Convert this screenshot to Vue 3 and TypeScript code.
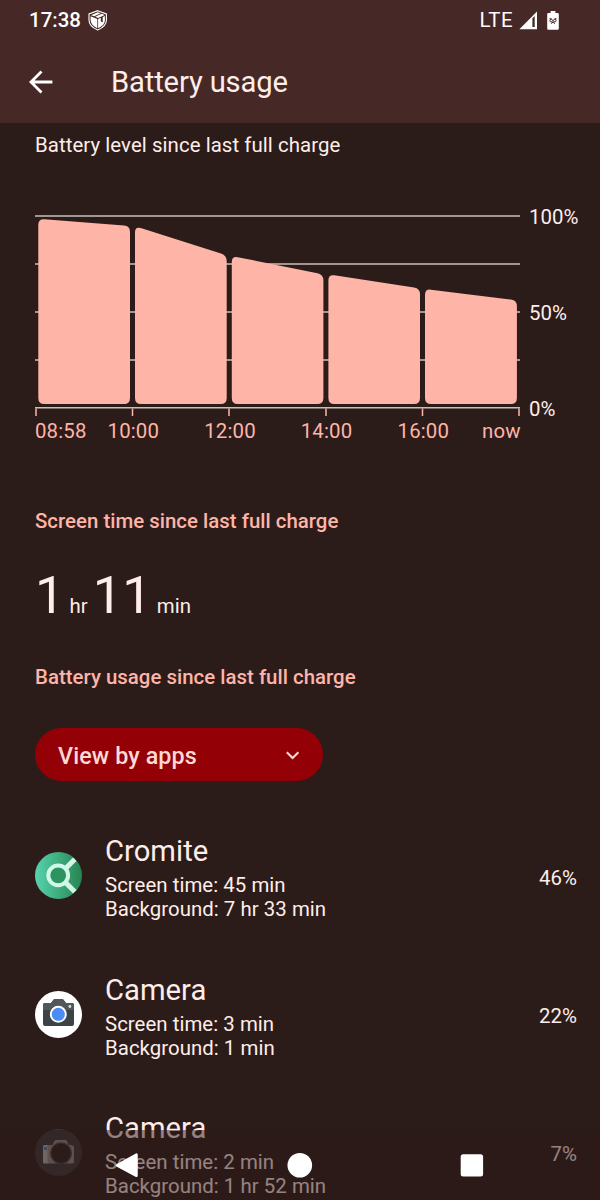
<script setup lang="ts">
interface AppUsage {
  name: string
  screen: string
  background: string
  percent: string
  icon: 'cromite' | 'camera' | 'dslr'
}

interface Point {
  x: number
  y: number
}

const apps: AppUsage[] = [
  { name: 'Cromite', screen: '45 min', background: '7 hr 33 min', percent: '46%', icon: 'cromite' },
  { name: 'Camera', screen: '3 min', background: '1 min', percent: '22%', icon: 'camera' },
  { name: 'Camera', screen: '2 min', background: '1 hr 52 min', percent: '7%', icon: 'dslr' },
]

const gridLines = [16, 64, 112, 160, 207.7]
const ticks = [36, 132.5, 229, 326, 422.5, 519]

const levels = [
  { x1: 38.3, x2: 130, y1: 18.8, y2: 26 },
  { x1: 135, x2: 226.7, y1: 26.3, y2: 55.4 },
  { x1: 231.8, x2: 323.4, y1: 56, y2: 74.4 },
  { x1: 328.4, x2: 420, y1: 74.4, y2: 88.4 },
  { x1: 425, x2: 516.9, y1: 88.9, y2: 100.3 },
]

// Moves from one point towards another by a fixed distance
function toward(a: Point, b: Point, d: number): string {
  const len = Math.hypot(b.x - a.x, b.y - a.y)
  return `${(a.x + ((b.x - a.x) * d) / len).toFixed(2)} ${(a.y + ((b.y - a.y) * d) / len).toFixed(2)}`
}

function roundedPath(points: Point[], r: number): string {
  return (
    points
      .map((p, i) => {
        const prev = points[(i + points.length - 1) % points.length]
        const next = points[(i + 1) % points.length]
        return `${i ? 'L' : 'M'}${toward(p, prev, r)}Q${p.x} ${p.y} ${toward(p, next, r)}`
      })
      .join('') + 'Z'
  )
}

const bars = levels.map((l) =>
  roundedPath(
    [
      { x: l.x1, y: l.y1 },
      { x: l.x2, y: l.y2 },
      { x: l.x2, y: 203.9 },
      { x: l.x1, y: 203.9 },
    ],
    6,
  ),
)

const hours = [
  { x: 133.3, label: '10:00' },
  { x: 230, label: '12:00' },
  { x: 326.5, label: '14:00' },
  { x: 423.3, label: '16:00' },
]
</script>

<template>
  <div class="screen">
    <header class="top">
      <div class="status">
        <span class="clock">17:38</span>
        <svg class="shield" width="20" height="21" viewBox="0 0 20 21">
          <path d="M9.700 .7 18.400 4v6c0 4.500-3 7.700-8.700 10C4 17.700 1 14.500 1 10V4Z" fill="none" stroke="#fff" stroke-width="1.100" />
          <path d="M2.600 6.200 9.300 9v9.200C4.800 16 2.600 13.300 2.600 10ZM3 5.200 9.700 2.200l3 1.100-6.400 2.900ZM7.200 6.700l6.500-2.900 3.100 1.200-6.600 2.900ZM10.100 9l2.700-1.200v3.700l1.900.8V7.100l2.200-1v4.100c0 3.300-2.300 5.900-6.800 8.100Z" fill="#fff" />
        </svg>
        <span class="lte">LTE</span>
        <svg class="signal" width="19" height="19" viewBox="0 0 19 19">
          <path d="M18 .5V18.300H.4Z" fill="#fff" />
          <path d="M13.400 7.200 15.700 5V16h-2.300Z" fill="#462926" />
        </svg>
        <svg class="batt" width="12" height="19" viewBox="0 0 12 19">
          <path d="M3.600 0h4.800v2h2.200Q11.800 2 11.800 3.200v14.300q0 1.200-1.200 1.200H1.400Q.2 18.700.2 17.500V3.200Q.2 2 1.400 2h2.200Z" fill="#fff" />
          <g stroke="#462926" fill="none" stroke-width="1">
            <circle cx="4.200" cy="9.600" r="1.300" />
            <circle cx="7.800" cy="9.600" r="1.300" />
            <path d="M2.500 7.700h2M7.500 7.700h2M4 12.500 6 11.300l2 1.200" />
          </g>
        </svg>
      </div>
      <div class="titlebar">
        <svg class="back" width="26" height="26" viewBox="0 0 26 26">
          <path d="M24.400 13H3.500M13.500 2.500 3 13l10.500 10.500" fill="none" stroke="#fff" stroke-width="2.800" />
        </svg>
        <h1>Battery usage</h1>
      </div>
    </header>

    <main>
      <p class="summary">Battery level since last full charge</p>

      <svg class="chart" width="600" height="250" viewBox="0 0 600 250">
        <path v-for="y in gridLines" :key="y" :d="`M35 ${y}H520`" stroke="#c9c1b9" stroke-width="1.500" />
        <path v-for="x in ticks" :key="x" :d="`M${x} 208.500V216`" stroke="#ffb4a8" stroke-width="1.500" />
        <path v-for="(d, i) in bars" :key="i" :d="d" fill="#ffb4a8" />
        <g class="percent-labels">
          <text x="529" y="24">100%</text>
          <text x="529" y="119.700">50%</text>
          <text x="529" y="215.500">0%</text>
        </g>
        <g class="hour-labels">
          <text x="35" y="238.300">08:58</text>
          <text v-for="h in hours" :key="h.label" :x="h.x" y="238.300" text-anchor="middle">{{ h.label }}</text>
          <text x="520.700" y="238.300" text-anchor="end">now</text>
        </g>
      </svg>

      <h2 class="screen-title">Screen time since last full charge</h2>
      <p class="duration"><b>1</b> hr <b>11</b> min</p>
      <h2 class="usage-title">Battery usage since last full charge</h2>

      <button class="spinner" type="button">
        <span>View by apps</span>
        <svg width="14" height="9" viewBox="0 0 14 9">
          <path d="M.8 1.200 6.600 7l5.800-5.800" fill="none" stroke="#ffdad4" stroke-width="2" />
        </svg>
      </button>

      <ul class="apps">
        <li v-for="(app, i) in apps" :key="i" class="row">
          <svg class="icon" width="47" height="47" viewBox="0 0 47 47">
            <template v-if="app.icon === 'cromite'">
              <defs>
                <linearGradient id="cromite-bg">
                  <stop offset="0" stop-color="#57d3ac" />
                  <stop offset="1" stop-color="#278451" />
                </linearGradient>
                <clipPath id="round"><circle cx="23.500" cy="23.500" r="23.500" /></clipPath>
              </defs>
              <g clip-path="url(#round)">
                <rect width="47" height="47" fill="url(#cromite-bg)" />
                <path d="M30 17 39.800 7.200M30 30l9.800 9.800" stroke="#d0f7e8" stroke-width="5" />
                <circle cx="23.200" cy="23.300" r="9.900" fill="#2c945f" stroke="#d0f7e8" stroke-width="4" />
              </g>
            </template>
            <template v-else-if="app.icon === 'camera'">
              <circle cx="23.500" cy="23.500" r="23.500" fill="#fff" />
              <path d="M10 12h6l2.500-3.300Q19.200 8 20.200 8h6.600q1 0 1.700.7L31 12h6q2 0 2 2v19q0 2-2 2H10q-2 0-2-2V14q0-2 2-2Z" fill="#3c4347" />
              <path d="M10 12h6l2.500-3.300Q19.200 8 20.200 8h6.600q1 0 1.700.7L31 12h6q2 0 2 2v5H8v-5q0-2 2-2Z" fill="#50585c" />
              <circle cx="23.300" cy="23.300" r="7.500" fill="#4b8bf5" stroke="#fff" stroke-width="1.900" />
              <circle cx="34.900" cy="15.500" r="1.400" fill="#dce0e1" />
            </template>
            <template v-else>
              <circle cx="23.500" cy="23.500" r="23.500" fill="#383838" />
              <path d="M8 17.500q0-1.500 1.500-1.500h4v18.500h-4Q8 34.500 8 33Z" fill="#b5b0ae" />
              <path d="M12.500 16h5l2-4q.7-1 2-1h8.500q1.300 0 2 1l1.300 3.500 4.200 1q1.500.5 1.500 2V33q0 1.500-1.500 1.500h-25Z" fill="#8c8886" />
              <circle cx="26" cy="24.200" r="10.300" fill="#28211f" stroke="#4a4442" stroke-width="1.200" />
              <rect x="9" y="18" width="3" height="3" fill="#1d8ed0" />
            </template>
          </svg>
          <div class="info">
            <h3>{{ app.name }}</h3>
            <p>Screen time: {{ app.screen }}</p>
            <p>Background: {{ app.background }}</p>
          </div>
          <span class="percent">{{ app.percent }}</span>
        </li>
      </ul>
    </main>

    <nav class="navbar">
      <svg width="600" height="70" viewBox="0 0 600 70">
        <path d="M117 35.300 136.500 24.500V45.800Z" fill="#fff" stroke="#fff" stroke-width="2.500" stroke-linejoin="round" />
        <circle cx="299.800" cy="35.200" r="12.300" fill="#fff" />
        <rect x="460.700" y="24.200" width="22.400" height="22.400" rx="2.500" fill="#fff" />
      </svg>
    </nav>
  </div>
</template>

<style>
body {
  background: #2b1c1a;
}
</style>

<style scoped>
.screen {
  position: relative;
  width: 600px;
  height: 1200px;
  overflow: hidden;
  background: #2b1c1a;
  color: #ffede9;
  font-family: Roboto, sans-serif;
  font-size: 20.4px;
  letter-spacing: 0.04px;
}

h1, h2, h3, p, ul {
  margin: 0;
  padding: 0;
  font-weight: 400;
}

.top {
  height: 123px;
  background: #462926;
}

.status {
  display: flex;
  align-items: center;
  height: 40px;
  padding: 0 41px 0 29px;
  color: #fff;
}

.clock {
  width: 59px;
  font-weight: 500;
}

.lte {
  margin-left: auto;
  letter-spacing: 0.5px;
}

.signal {
  margin-left: 6px;
}

.batt {
  margin-left: 9px;
}

.titlebar {
  display: flex;
  align-items: center;
  height: 84px;
  padding-left: 28px;
}

.titlebar h1 {
  margin-left: 57px;
  font-size: 29.2px;
  letter-spacing: -0.15px;
}

.summary {
  height: 77px;
  padding-left: 35px;
  line-height: 44px;
  letter-spacing: 0.07px;
}

.chart {
  display: block;
  font-size: 20.4px;
}

.percent-labels {
  fill: #ffede9;
}

.hour-labels {
  fill: #ffb4a8;
  letter-spacing: 0.15px;
}

h2 {
  padding-left: 35px;
  color: #ffb4a8;
  font-size: 20.4px;
  font-weight: 500;
  line-height: 24px;
  letter-spacing: 0.02px;
}

.screen-title {
  margin-top: 59px;
}

.duration {
  height: 132px;
  padding-left: 35px;
  line-height: 124px;
  letter-spacing: 0;
}

.duration b {
  font-size: 52.500px;
  font-weight: 400;
}

.spinner {
  display: flex;
  align-items: center;
  justify-content: space-between;
  width: 288px;
  height: 53px;
  margin: 39px 0 0 35px;
  padding: 2px 23px 0;
  border: 0;
  border-radius: 27px;
  background: #930006;
  color: #ffdad4;
  font: 500 23.3px Roboto, sans-serif;
  letter-spacing: 0.12px;
}

.spinner svg {
  margin-bottom: 1px;
}

.apps {
  margin-top: 26px;
  list-style: none;
}

.row {
  display: flex;
  align-items: center;
  height: 138.400px;
  padding: 0 23px 0 35px;
}

.icon {
  margin-bottom: 1px;
}

.info {
  margin-left: 23px;
  padding-top: 3px;
}

.info h3 {
  font-size: 29.2px;
  line-height: 35px;
  margin-bottom: 4px;
}

.info p {
  line-height: 24px;
}

.percent {
  margin-left: auto;
  padding-top: 3px;
}

.navbar {
  position: absolute;
  left: 0;
  bottom: 0;
  height: 70px;
  background: rgba(46, 23, 21, 0.5);
}
</style>
